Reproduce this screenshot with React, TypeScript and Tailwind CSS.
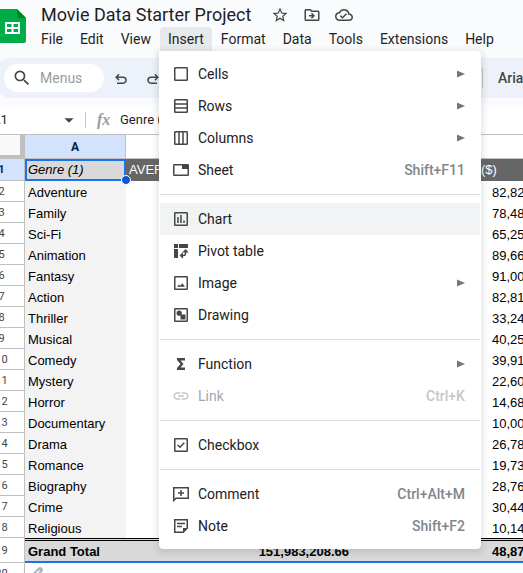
import type { ReactNode } from "react";
import {
  MdStarBorder,
  MdOutlineDriveFileMove,
  MdOutlineCloudDone,
  MdSearch,
  MdLink,
  MdArrowDropDown,
} from "react-icons/md";

function Icon({ children }: { children: ReactNode }) {
  return (
    <svg
      viewBox="0 0 18 18"
      className="size-[18px]"
      fill="none"
      stroke="currentColor"
      strokeWidth="1.5"
      aria-hidden="true"
    >
      {children}
    </svg>
  );
}

const frame = <rect x="2.75" y="2.75" width="12.5" height="12.5" rx="0.6" />;

const icons: Record<string, ReactNode> = {
  Cells: <Icon>{frame}</Icon>,
  Rows: (
    <Icon>
      {frame}
      <path d="M3 7h12M3 11h12" />
    </Icon>
  ),
  Columns: (
    <Icon>
      {frame}
      <path d="M7 3v12M11 3v12" />
    </Icon>
  ),
  Sheet: (
    <Icon>
      <rect x="1.75" y="3.75" width="14.5" height="10.5" rx="0.6" />
      <path d="M10 4h6v4h-6z" fill="currentColor" stroke="none" />
    </Icon>
  ),
  Chart: (
    <Icon>
      {frame}
      <path d="M6 7v6M9 5v8M12 10.5V13" />
    </Icon>
  ),
  "Pivot table": (
    <Icon>
      <path
        d="M2 2h4v4H2zM7 2h9v4H7zM2 7h4v9H3a1 1 0 0 1-1-1z"
        fill="currentColor"
        stroke="none"
      />
      <path d="M10 13.500h1.500a2 2 0 0 0 2-2V10" />
      <path
        d="M13.500 7l3.200 3.500h-6.400zM7.500 13.500l3.500-3.200v6.400z"
        fill="currentColor"
        stroke="none"
      />
    </Icon>
  ),
  Image: (
    <Icon>
      {frame}
      <path
        d="M5 12.800l2-2.300 1.300 1.200 2-2.400 2.700 3.500z"
        fill="currentColor"
        stroke="none"
      />
    </Icon>
  ),
  Drawing: (
    <Icon>
      {frame}
      <circle cx="7.200" cy="7.200" r="2.600" fill="currentColor" stroke="none" />
      <path d="M8.500 8.500h5v5h-5z" fill="currentColor" stroke="none" />
    </Icon>
  ),
  Function: (
    <Icon>
      <path
        d="M5 3h8v2.500H8.500L11.500 9l-3 3.500H13V15H5v-2l3.500-4L5 5z"
        fill="currentColor"
        stroke="none"
      />
    </Icon>
  ),
  Link: <MdLink className="size-5" />,
  Checkbox: (
    <Icon>
      {frame}
      <path d="M5.700 9l2.300 2.300 4.300-4.500" />
    </Icon>
  ),
  Comment: (
    <Icon>
      <path d="M1.750 15.500V2.750h14.500v10.500H4z" />
      <path d="M9 5v6M6 8h6" />
    </Icon>
  ),
  Note: (
    <Icon>
      <path d="M15.250 11V2.750H2.750v12.500H11z" />
      <path d="M11 16v-5h5z" fill="currentColor" stroke="none" />
      <path d="M5 6.500h8M5 9.500h5" />
    </Icon>
  ),
};

type Item = { label: string; keys?: string; sub?: boolean; disabled?: boolean };

const groups: Item[][] = [
  [
    { label: "Cells", sub: true },
    { label: "Rows", sub: true },
    { label: "Columns", sub: true },
    { label: "Sheet", keys: "Shift+F11" },
  ],
  [
    { label: "Chart" },
    { label: "Pivot table" },
    { label: "Image", sub: true },
    { label: "Drawing" },
  ],
  [
    { label: "Function", sub: true },
    { label: "Link", keys: "Ctrl+K", disabled: true },
  ],
  [{ label: "Checkbox" }],
  [
    { label: "Comment", keys: "Ctrl+Alt+M" },
    { label: "Note", keys: "Shift+F2" },
  ],
];

function InsertMenu() {
  return (
    <div className="absolute top-full -left-px z-20 w-[322px] rounded-b rounded-tr border border-white bg-white py-1.5 shadow-[0_2px_6px_2px_rgba(60,64,67,0.15)]">
      {groups.map((items, g) => (
        <div
          key={g}
          className={g > 0 ? "mt-2 border-t border-[#dadce0] pt-2" : ""}
        >
          {items.map(({ label, keys, sub, disabled }) => (
            <button
              key={label}
              disabled={disabled}
              className={`flex h-8 w-full items-center pr-[15px] pl-3 text-left text-sm ${
                label === "Chart" ? "bg-[#f1f3f4]" : ""
              } ${disabled ? "text-[#a3a7ab]" : "text-[#202124]"}`}
            >
              <span
                className={`mr-2 flex w-[18px] shrink-0 justify-center ${
                  disabled ? "text-[#c4c6c8]" : "text-[#444746]"
                }`}
              >
                {icons[label]}
              </span>
              <span className="grow">{label}</span>
              {keys && (
                <span
                  className={`font-medium ${disabled ? "text-[#c4c6c8]" : "text-[#80868b]"}`}
                >
                  {keys}
                </span>
              )}
              {sub && (
                <svg viewBox="0 0 8 8" className="size-2 fill-[#777]" aria-hidden="true">
                  <path d="M0 .5l8 3.500-8 3.500z" />
                </svg>
              )}
            </button>
          ))}
        </div>
      ))}
    </div>
  );
}

const menus = ["File", "Edit", "View", "Insert", "Format", "Data", "Tools", "Extensions", "Help"];

const rows: [string, string][] = [
  ["Adventure", "82,82"],
  ["Family", "78,48"],
  ["Sci-Fi", "65,25"],
  ["Animation", "89,66"],
  ["Fantasy", "91,00"],
  ["Action", "82,81"],
  ["Thriller", "33,24"],
  ["Musical", "40,25"],
  ["Comedy", "39,91"],
  ["Mystery", "22,60"],
  ["Horror", "14,68"],
  ["Documentary", "10,00"],
  ["Drama", "26,78"],
  ["Romance", "19,73"],
  ["Biography", "28,76"],
  ["Crime", "30,44"],
  ["Religious", "10,14"],
];

const totalCell =
  "border-t-3 border-b-2 [border-top-style:double] border-t-black border-b-[#1a73e8] bg-[#d9d9d9] pt-0.5";

function RowNumber({ n }: { n: number }) {
  return (
    <th
      scope="row"
      className={`border-r border-b border-[#c0c0c0] pt-px text-center font-[Roboto,sans-serif] text-[11px] ${
        n === 1 ? "bg-[#d3e3fd] font-bold text-[#041e49]" : "bg-white font-normal text-[#444746]"
      }`}
    >
      {n}
    </th>
  );
}

function SheetGrid() {
  return (
    <table className="-ml-[21px] w-[calc(100%+21px)] table-fixed border-separate border-spacing-0 bg-white text-[13px] leading-4 whitespace-nowrap text-black">
      <colgroup>
        <col className="w-[46px]" />
        <col className="w-[101px]" />
        <col className="w-[225px]" />
        <col className="w-[127px]" />
        <col />
      </colgroup>
      <thead className="font-[Roboto,sans-serif] text-xs">
        <tr className="h-[25px]">
          <th className="border-t border-r-5 border-b-4 border-[#c0c0c0] bg-[#f8f9fa]" />
          <th
            scope="col"
            className="border-t border-r border-b border-[#c0c0c0] bg-[#d3e3fd] text-[#041e49]"
          >
            A
          </th>
          <th className="border-t border-b border-[#c0c0c0]" />
          <th className="border-t border-b border-[#c0c0c0]" />
          <th className="border-t border-b border-[#c0c0c0]" />
        </tr>
      </thead>
      <tbody>
        <tr className="h-[22px]">
          <RowNumber n={1} />
          <td className="relative border-2 border-[#1a73e8] bg-[#d9d9d9] pl-px italic">
            Genre (1)
            <span className="absolute -right-[7px] -bottom-1.5 size-[10px] rounded-full border border-white bg-[#0b57d0]" />
          </td>
          <td className="bg-[#666] pl-[3px] text-white">AVERAGE</td>
          <td className="bg-[#666]" />
          <td className="bg-[#666] pl-[3px] text-white">($)</td>
        </tr>
        {rows.map(([genre, value], i) => (
          <tr key={genre} className="h-[21px]">
            <RowNumber n={i + 2} />
            <td className="bg-[#f3f3f3] pt-0.5 pl-[3px]">{genre}</td>
            <td />
            <td />
            <td className="pt-0.5 pl-[14px]">{value}</td>
          </tr>
        ))}
        <tr className="h-[25px] font-bold">
          <RowNumber n={19} />
          <td className={`${totalCell} pl-[3px]`}>Grand Total</td>
          <td className={`${totalCell} pr-0.5 text-right`}>151,983,208.66</td>
          <td className={totalCell} />
          <td className={`${totalCell} pl-[14px]`}>48,87</td>
        </tr>
        <tr className="h-[21px]">
          <RowNumber n={20} />
          <td className="relative">
            <span className="absolute top-0 left-0 flex size-[22px] items-center justify-center rounded bg-white shadow-md">
              <svg viewBox="0 0 16 16" className="size-4 fill-[#b4b4b4]" aria-hidden="true">
                <path d="M1 15l1-5 8-8q2-2 4 0t0 4l-8 8zM4 11l1 1 7-7-1-1z" fillRule="evenodd" />
              </svg>
            </span>
          </td>
          <td />
          <td />
          <td />
        </tr>
      </tbody>
    </table>
  );
}

export default function App() {
  return (
    <div className="h-screen overflow-hidden bg-[#f9fbfd] font-['Liberation_Sans',Arial,sans-serif]">
      <header className="flex h-[58px] font-[Roboto,sans-serif]">
        <svg viewBox="0 0 26 34" className="mt-[9px] h-[34px] w-[26px]" aria-label="Sheets">
          <path d="M0 0h17l9 9v23q0 2-2 2H0z" fill="#00ac47" />
          <path d="M17 0l9 9h-9z" fill="#00832d" />
          <path
            d="M5 13h15v12H5zM7 15v3h4.500v-3zM13.500 15v3H18v-3zM7 20v3h4.500v-3zM13.500 20v3H18v-3z"
            fill="#fff"
            fillRule="evenodd"
          />
        </svg>
        <div className="min-w-0 grow pl-[7px]">
          <div className="flex h-[27px] items-center pt-0.5 pl-2 text-[#444746]">
            <h1 className="mr-5 text-lg leading-6 whitespace-nowrap text-[#1f1f1f]">
              Movie Data Starter Project
            </h1>
            <div className="flex gap-[14px]">
              <button aria-label="Star">
                <MdStarBorder className="size-[18px]" />
              </button>
              <button aria-label="Move">
                <MdOutlineDriveFileMove className="size-[18px]" />
              </button>
              <button aria-label="Saved to Drive">
                <MdOutlineCloudDone className="size-[18px]" />
              </button>
            </div>
          </div>
          <nav className="flex gap-px text-sm text-[#1f1f1f]">
            {menus.map((name) => (
              <div key={name} className="relative">
                <button
                  className={`h-6 rounded-t px-2 ${name === "Insert" ? "bg-[#e6eaed]" : ""}`}
                >
                  {name}
                </button>
                {name === "Insert" && <InsertMenu />}
              </div>
            ))}
          </nav>
        </div>
      </header>

      <div className="-ml-2 flex h-10 items-center rounded-l-[20px] bg-[#edf2fa] pl-3 font-[Roboto,sans-serif] text-sm text-[#444746]">
        <label className="flex h-7 w-[100px] shrink-0 items-center gap-2 rounded-full bg-white pl-2">
          <MdSearch className="size-5 shrink-0" />
          <input
            aria-label="Menus"
            placeholder="Menus"
            className="w-14 outline-none placeholder:text-[#9a9c9e]"
          />
        </label>
        <button aria-label="Undo" className="ml-2">
          <Icon>
            <path d="M7 5.200L4.200 8.200 7 11.200M4.500 8.200H11a3 3 0 0 1 0 6H5" />
          </Icon>
        </button>
        <button aria-label="Redo" className="ml-[14px]">
          <Icon>
            <path d="M11 5.200l2.800 3-2.800 3M13.500 8.200H7a3 3 0 0 0 0 6h6" />
          </Icon>
        </button>
        <div className="ml-auto flex h-5 w-[41px] items-center overflow-hidden border-l border-[#c7c7c7] pl-[15px] font-medium">
          Arial
        </div>
      </div>

      <div className="mt-[7px] flex h-[29px] items-center overflow-hidden bg-white font-[Roboto,sans-serif] text-[13px] text-[#1f1f1f]">
        <span className="-ml-2 w-[66px] shrink-0">A1</span>
        <MdArrowDropDown className="size-[22px] text-[#444746]" />
        <span className="ml-[5px] h-4 border-l border-[#c7c7c7]" />
        <span className="ml-[11px] w-[23px] font-['Liberation_Serif',serif] text-base leading-5 font-bold text-[#9a9c9e] italic">
          fx
        </span>
        <span>Genre (1)</span>
      </div>

      <SheetGrid />
    </div>
  );
}
